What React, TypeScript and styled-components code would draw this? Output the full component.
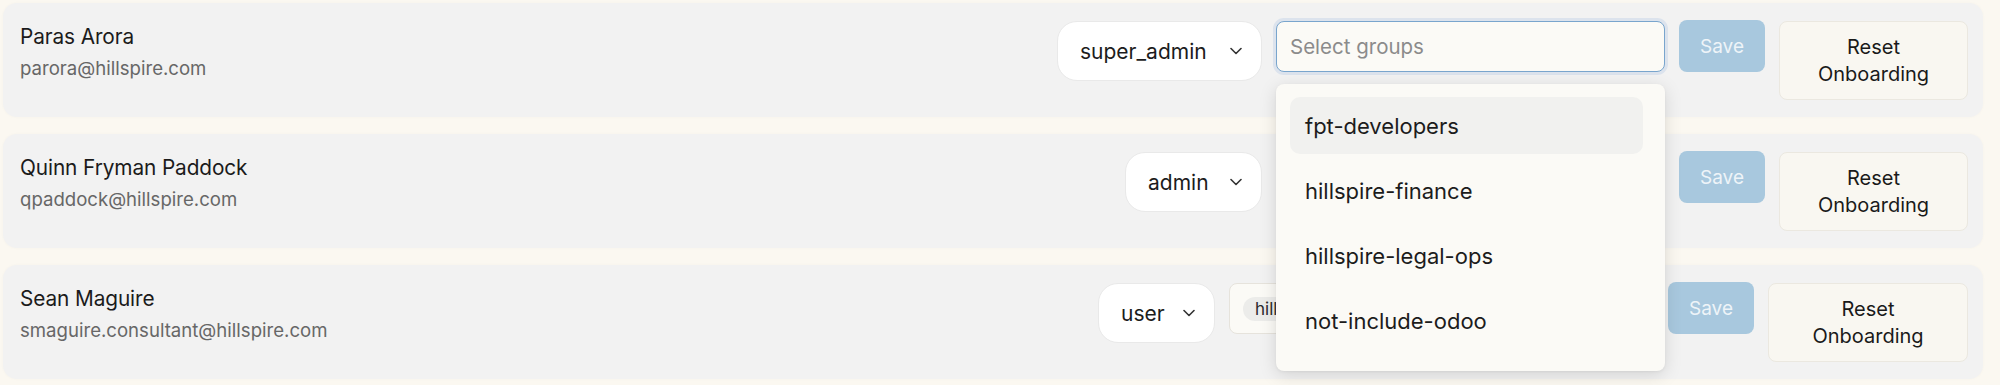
import React from "react";
import styled, { createGlobalStyle } from "styled-components";

const GlobalStyle = createGlobalStyle`
  html, body {
    margin: 0;
    padding: 0;
    background: #fbf8f1;
    font-family: Inter, "Noto Sans", sans-serif;
    color: #1c1c1c;
  }
  * { box-sizing: border-box; }
`;

const Page = styled.div`
  display: flex;
  flex-direction: column;
  gap: 17px;
  padding: 3px 17px 5px 3px;
  width: 2000px;
  height: 385px;
  overflow: hidden;
`;

const Card = styled.div`
  display: flex;
  justify-content: space-between;
  align-items: flex-start;
  background: #f2f2f2;
  border-radius: 14px;
  padding: 18px 15px 17px 17px;
  min-height: 114px;
  box-shadow: 0 0 3px rgba(0, 0, 0, 0.03);
`;

const Info = styled.div`
  display: flex;
  flex-direction: column;
  padding-top: 2px;
`;

const Name = styled.div`
  font-size: 20.8px;
  line-height: 28px;
  color: #1b1b1b;
  letter-spacing: -0.1px;
`;

const Email = styled.div`
  font-size: 18.6px;
  line-height: 26px;
  margin-top: 4px;
  color: #676767;
`;

const Controls = styled.div`
  display: flex;
  align-items: flex-start;
  gap: 14px;
`;

const RoleSelect = styled.div<{ $w: number }>`
  width: ${(p) => p.$w}px;
  height: 60px;
  display: flex;
  align-items: center;
  justify-content: space-between;
  padding: 0 19px 0 22px;
  background: #ffffff;
  border: 1px solid #e9e9e9;
  border-radius: 20px;
  font-size: 21px;
  color: #1c1c1c;
`;

const GroupsWrap = styled.div`
  position: relative;
`;

const GroupsInput = styled.div<{ $w: number; $focused?: boolean }>`
  width: ${(p) => p.$w}px;
  height: 51px;
  display: flex;
  align-items: center;
  padding: 0 13px;
  background: #fbfaf6;
  border-radius: 8px;
  border: ${(p) => (p.$focused ? "1.5px solid #79a5cd" : "1px solid #e6e3dc")};
  box-shadow: ${(p) => (p.$focused ? "0 0 0 3px rgba(140, 175, 220, 0.22)" : "none")};
  font-size: 20.5px;
  overflow: hidden;
`;

const Placeholder = styled.span`
  color: #8b8b8b;
`;

const Chip = styled.span`
  display: inline-flex;
  align-items: center;
  height: 24px;
  padding: 0 12px;
  border-radius: 12px;
  background: #ececea;
  font-size: 17px;
  color: #2a2a2a;
  white-space: nowrap;
`;

const SaveButton = styled.button`
  width: 86px;
  height: 52px;
  border: none;
  border-radius: 8px;
  background: #a8c8de;
  color: #eef4f8;
  font-family: inherit;
  font-size: 19px;
  padding: 0;
  margin-top: -1px;
`;

const ResetButton = styled.button<{ $w: number }>`
  width: ${(p) => p.$w}px;
  height: 79px;
  border: 1px solid #ebe8e0;
  border-radius: 8px;
  background: #f9f7f1;
  color: #1a1a1a;
  font-family: inherit;
  font-size: 20px;
  line-height: 27px;
  padding: 0 8px;
`;

const Dropdown = styled.div`
  position: absolute;
  top: 63px;
  left: 0;
  width: 389px;
  height: 287px;
  z-index: 10;
  background: #fbfaf6;
  border-radius: 8px;
  box-shadow: 0 4px 18px rgba(0, 0, 0, 0.13), 0 1px 3px rgba(0, 0, 0, 0.05);
  padding: 13px 22px 21px 14px;
  display: flex;
  flex-direction: column;
  gap: 8px;
`;

const Option = styled.div<{ $active?: boolean }>`
  height: 57px;
  display: flex;
  align-items: center;
  padding: 0 15px;
  border-radius: 10px;
  background: ${(p) => (p.$active ? "#f1f1ef" : "transparent")};
  font-size: 22px;
  color: #1c1c1c;
`;

const Chevron = () => (
  <svg width="12" height="8" viewBox="0 0 12 8" fill="none">
    <path d="M1 1.5 L6 6.5 L11 1.5" stroke="#333" strokeWidth="1.6" strokeLinecap="round" strokeLinejoin="round" />
  </svg>
);

type User = {
  name: string;
  email: string;
  role: string;
  roleW: number;
  inputW: number;
  resetW: number;
  chip?: string;
  open?: boolean;
};

const users: User[] = [
  { name: "Paras Arora", email: "parora@hillspire.com", role: "super_admin", roleW: 205, inputW: 389, resetW: 189, open: true },
  { name: "Quinn Fryman Paddock", email: "qpaddock@hillspire.com", role: "admin", roleW: 137, inputW: 389, resetW: 189 },
  { name: "Sean Maguire", email: "smaguire.consultant@hillspire.com", role: "user", roleW: 117, inputW: 425, resetW: 200, chip: "hillspire-finance" },
];

const groups = ["fpt-developers", "hillspire-finance", "hillspire-legal-ops", "not-include-odoo"];

export default function App() {
  return (
    <>
      <GlobalStyle />
      <Page>
        {users.map((u) => (
          <Card key={u.email}>
            <Info>
              <Name>{u.name}</Name>
              <Email>{u.email}</Email>
            </Info>
            <Controls>
              <RoleSelect $w={u.roleW}>
                <span>{u.role}</span>
                <Chevron />
              </RoleSelect>
              <GroupsWrap>
                <GroupsInput $w={u.inputW} $focused={u.open}>
                  {u.chip ? <Chip>{u.chip}</Chip> : <Placeholder>Select groups</Placeholder>}
                </GroupsInput>
                {u.open && (
                  <Dropdown>
                    {groups.map((g, i) => (
                      <Option key={g} $active={i === 0}>
                        {g}
                      </Option>
                    ))}
                  </Dropdown>
                )}
              </GroupsWrap>
              <SaveButton>Save</SaveButton>
              <ResetButton $w={u.resetW}>
                Reset
                <br />
                Onboarding
              </ResetButton>
            </Controls>
          </Card>
        ))}
      </Page>
    </>
  );
}
